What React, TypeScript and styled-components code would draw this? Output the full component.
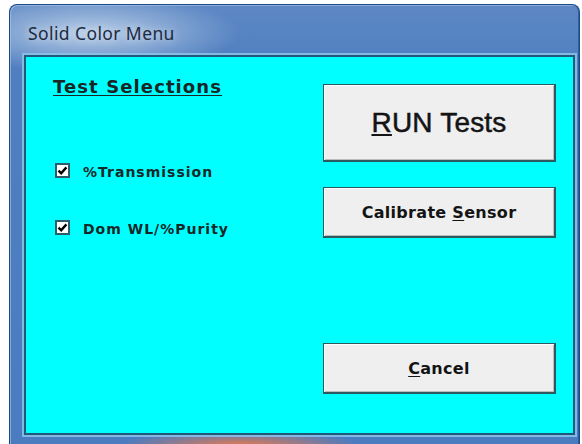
import React from "react";
import styled, { createGlobalStyle } from "styled-components";

const GlobalStyle = createGlobalStyle`
  html, body {
    margin: 0;
    padding: 0;
    background: #ffffff;
  }
  #root {
    width: 582px;
    height: 444px;
    overflow: hidden;
  }
`;

const Window = styled.div`
  box-sizing: border-box;
  width: 571px;
  height: 441px;
  margin: 4px 2px 0 9px;
  display: flex;
  flex-direction: column;
  padding: 0 4px 10px 14px;
  border: 1px solid #1c4a86;
  border-bottom: none;
  border-radius: 8px 8px 0 0;
  background:
    radial-gradient(ellipse 120px 14px at 230px 100%, rgba(255, 120, 60, 0.85), rgba(255, 120, 60, 0) 100%),
    radial-gradient(ellipse 150px 40px at 80px 28px, rgba(215, 228, 242, 0.75), rgba(215, 228, 242, 0) 100%),
    linear-gradient(180deg, #5d88c4 0%, #4f7fc0 14%, #4b7cc0 100%);
  box-shadow: inset 1px 1px 0 rgba(170, 200, 235, 0.6), inset -1px 0 0 rgba(30, 70, 130, 0.6);
`;

const TitleBar = styled.div`
  height: 50px;
  display: flex;
  align-items: flex-start;
  padding: 18px 0 0 4px;
  box-sizing: border-box;
`;

const Title = styled.span`
  font-family: "Noto Sans", "Open Sans", sans-serif;
  font-size: 17.5px;
  line-height: 20px;
  letter-spacing: 0.4px;
  color: #1c2a40;
  text-shadow: 0 0 8px rgba(255, 255, 255, 0.7);
`;

const Client = styled.div`
  flex: 1;
  display: grid;
  grid-template-columns: 1fr 233px;
  padding: 0 17px 0 27px;
  background: #00ffff;
  border: 2px solid #1f5b78;
  box-shadow: 0 0 0 2px rgba(140, 195, 235, 0.85);
`;

const SelectionColumn = styled.div`
  display: flex;
  flex-direction: column;
  padding-top: 20px;
`;

const Heading = styled.div`
  font-family: "DejaVu Sans", sans-serif;
  font-weight: bold;
  font-size: 18px;
  line-height: 20px;
  letter-spacing: 1.1px;
  color: #1a2626;
  text-decoration: underline;
  text-underline-offset: 2px;
  margin-bottom: 65px;
`;

const CheckRow = styled.label`
  display: flex;
  align-items: center;
  gap: 13px;
  height: 17px;
  margin-left: 2px;
  margin-bottom: 40px;
`;

const Box = styled.span`
  box-sizing: border-box;
  width: 15px;
  height: 15px;
  border: 2px solid #2f5c66;
  background: #ffffff;
  display: flex;
  align-items: center;
  justify-content: center;
`;

const CheckLabel = styled.span`
  font-family: "DejaVu Sans", sans-serif;
  font-weight: bold;
  font-size: 14px;
  line-height: 17px;
  letter-spacing: 1px;
  color: #172828;
  padding-top: 3px;
`;

const ButtonColumn = styled.div`
  display: flex;
  flex-direction: column;
  padding-top: 27px;
`;

const Button = styled.button<{ $h: number; $gap: number; $big?: boolean }>`
  box-sizing: border-box;
  width: 233px;
  height: ${(p) => p.$h}px;
  margin-bottom: ${(p) => p.$gap}px;
  padding: 0;
  background: #efeff0;
  border: 1px solid #2d5a5e;
  border-right-width: 2px;
  border-bottom-width: 2px;
  box-shadow: inset 1px 1px 0 #ffffff, inset -1px -1px 0 #b8bcbc;
  color: #141414;
  font-family: ${(p) => (p.$big ? `"Liberation Sans", Arial, sans-serif` : `"DejaVu Sans", sans-serif`)};
  font-weight: ${(p) => (p.$big ? "normal" : "bold")};
  font-size: ${(p) => (p.$big ? "28px" : "16px")};
  letter-spacing: ${(p) => (p.$big ? "0.2px" : "0.3px")};
  -webkit-text-stroke: ${(p) => (p.$big ? "0.5px #141414" : "0")};
  display: flex;
  align-items: center;
  justify-content: center;
  cursor: default;
`;

const Key = styled.span`
  text-decoration: underline;
  text-underline-offset: 2px;
`;

function Check() {
  return (
    <Box>
      <svg width="11" height="11" viewBox="0 0 11 11">
        <path d="M1.5 5.6 L4.2 8.3 L9.4 2.4" fill="none" stroke="#000" strokeWidth="2.4" />
      </svg>
    </Box>
  );
}

export default function App() {
  return (
    <>
      <GlobalStyle />
      <Window>
        <TitleBar>
          <Title>Solid Color Menu</Title>
        </TitleBar>
        <Client>
          <SelectionColumn>
            <Heading>Test Selections</Heading>
            <CheckRow>
              <Check />
              <CheckLabel>%Transmission</CheckLabel>
            </CheckRow>
            <CheckRow>
              <Check />
              <CheckLabel>Dom WL/%Purity</CheckLabel>
            </CheckRow>
          </SelectionColumn>
          <ButtonColumn>
            <Button $h={78} $gap={25} $big>
              <span>
                <Key>R</Key>UN Tests
              </span>
            </Button>
            <Button $h={51} $gap={105}>
              <span>
                Calibrate <Key>S</Key>ensor
              </span>
            </Button>
            <Button $h={51} $gap={0}>
              <span>
                <Key>C</Key>ancel
              </span>
            </Button>
          </ButtonColumn>
        </Client>
      </Window>
    </>
  );
}
